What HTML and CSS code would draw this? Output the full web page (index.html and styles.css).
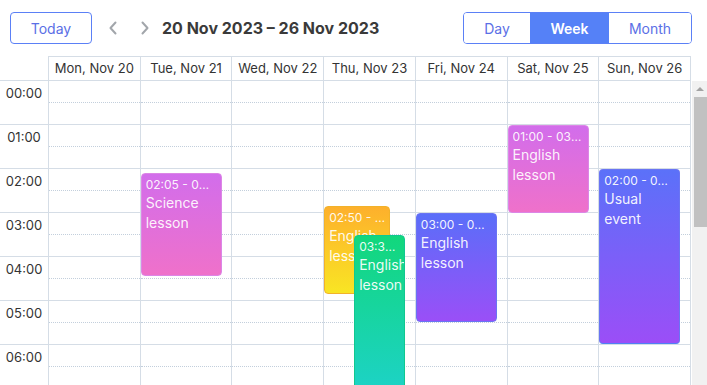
FILE: index.html
```html
<!DOCTYPE html>
<html lang="en">
<head>
<meta charset="utf-8">
<title>Scheduler</title>
<link rel="stylesheet" href="styles.css">
</head>
<body>
<div class="scheduler">
  <div class="toolbar">
    <button class="btn-today">Today</button>
    <button class="nav-btn nav-prev" aria-label="Previous">
      <svg width="10" height="14" viewBox="0 0 10 14"><path d="M7.5 1.5 L2.5 7 L7.5 12.5" fill="none" stroke="#a2a6ab" stroke-width="2" stroke-linecap="round" stroke-linejoin="round"/></svg>
    </button>
    <button class="nav-btn" aria-label="Next">
      <svg width="10" height="14" viewBox="0 0 10 14"><path d="M2.5 1.5 L7.5 7 L2.5 12.5" fill="none" stroke="#a2a6ab" stroke-width="2" stroke-linecap="round" stroke-linejoin="round"/></svg>
    </button>
    <div class="title">20 Nov 2023 – 26 Nov 2023</div>
    <div class="views">
      <button class="view">Day</button>
      <button class="view active">Week</button>
      <button class="view">Month</button>
    </div>
  </div>

  <div class="head">
    <div class="corner"></div>
    <div class="day-head">Mon, Nov 20</div>
    <div class="day-head">Tue, Nov 21</div>
    <div class="day-head">Wed, Nov 22</div>
    <div class="day-head">Thu, Nov 23</div>
    <div class="day-head">Fri, Nov 24</div>
    <div class="day-head">Sat, Nov 25</div>
    <div class="day-head">Sun, Nov 26</div>
  </div>

  <div class="body">
    <div class="grid">
      <div class="times">
        <div class="time">00:00</div>
        <div class="time">01:00</div>
        <div class="time">02:00</div>
        <div class="time">03:00</div>
        <div class="time">04:00</div>
        <div class="time">05:00</div>
        <div class="time">06:00</div>
        <div class="time">07:00</div>
      </div>

      <div class="day">
        <div class="slot"><div class="half"></div></div><div class="slot"><div class="half"></div></div><div class="slot"><div class="half"></div></div><div class="slot"><div class="half"></div></div><div class="slot"><div class="half"></div></div><div class="slot"><div class="half"></div></div><div class="slot"><div class="half"></div></div><div class="slot"><div class="half"></div></div>
      </div>

      <div class="day">
        <div class="slot"><div class="half"></div></div><div class="slot"><div class="half"></div></div><div class="slot"><div class="half"></div></div><div class="slot"><div class="half"></div></div><div class="slot"><div class="half"></div></div><div class="slot"><div class="half"></div></div><div class="slot"><div class="half"></div></div><div class="slot"><div class="half"></div></div>
        <div class="event pink" style="top:92px;height:103px;left:0;width:81px">
          <div class="ev-time">02:05 - 04:25</div>
          <div class="ev-title">Science lesson</div>
        </div>
      </div>

      <div class="day">
        <div class="slot"><div class="half"></div></div><div class="slot"><div class="half"></div></div><div class="slot"><div class="half"></div></div><div class="slot"><div class="half"></div></div><div class="slot"><div class="half"></div></div><div class="slot"><div class="half"></div></div><div class="slot"><div class="half"></div></div><div class="slot"><div class="half"></div></div>
      </div>

      <div class="day">
        <div class="slot"><div class="half"></div></div><div class="slot"><div class="half"></div></div><div class="slot"><div class="half"></div></div><div class="slot"><div class="half"></div></div><div class="slot"><div class="half"></div></div><div class="slot"><div class="half"></div></div><div class="slot"><div class="half"></div></div><div class="slot"><div class="half"></div></div>
        <div class="event orange" style="top:125px;height:88px;left:0;width:66px">
          <div class="ev-time">02:50 - 04:50</div>
          <div class="ev-title">English lesson</div>
        </div>
        <div class="event green" style="top:154px;height:175px;left:30px;width:51px">
          <div class="ev-time">03:30 - 07:30</div>
          <div class="ev-title">English lesson</div>
        </div>
      </div>

      <div class="day">
        <div class="slot"><div class="half"></div></div><div class="slot"><div class="half"></div></div><div class="slot"><div class="half"></div></div><div class="slot"><div class="half"></div></div><div class="slot"><div class="half"></div></div><div class="slot"><div class="half"></div></div><div class="slot"><div class="half"></div></div><div class="slot"><div class="half"></div></div>
        <div class="event violet" style="top:132px;height:109px;left:0;width:81px">
          <div class="ev-time">03:00 - 05:30</div>
          <div class="ev-title">English lesson</div>
        </div>
      </div>

      <div class="day">
        <div class="slot"><div class="half"></div></div><div class="slot"><div class="half"></div></div><div class="slot"><div class="half"></div></div><div class="slot"><div class="half"></div></div><div class="slot"><div class="half"></div></div><div class="slot"><div class="half"></div></div><div class="slot"><div class="half"></div></div><div class="slot"><div class="half"></div></div>
        <div class="event pink" style="top:44px;height:88px;left:0;width:81px">
          <div class="ev-time">01:00 - 03:00</div>
          <div class="ev-title">English lesson</div>
        </div>
      </div>

      <div class="day">
        <div class="slot"><div class="half"></div></div><div class="slot"><div class="half"></div></div><div class="slot"><div class="half"></div></div><div class="slot"><div class="half"></div></div><div class="slot"><div class="half"></div></div><div class="slot"><div class="half"></div></div><div class="slot"><div class="half"></div></div><div class="slot"><div class="half"></div></div>
        <div class="event blue" style="top:88px;height:175px;left:0;width:81px">
          <div class="ev-time">02:00 - 06:00</div>
          <div class="ev-title">Usual event</div>
        </div>
      </div>
    </div>

    <div class="scrollbar">
      <div class="sb-arrow"></div>
      <div class="sb-thumb"></div>
    </div>
  </div>
</div>
</body>
</html>
```

FILE: styles.css
```css
* { box-sizing: border-box; }

html, body {
  margin: 0;
  padding: 0;
  background: #ffffff;
}

body {
  font-family: Inter, "Noto Sans", "Liberation Sans", sans-serif;
  color: #333333;
  width: 707px;
  height: 385px;
  overflow: hidden;
}

.scheduler {
  display: flex;
  flex-direction: column;
  width: 707px;
}

/* ---------- toolbar ---------- */
.toolbar {
  display: flex;
  align-items: center;
  height: 56px;
  padding: 12px 15px 12px 10px;
}

.btn-today {
  width: 82px;
  height: 32px;
  border: 1px solid #5b80f6;
  border-radius: 4px;
  background: #ffffff;
  color: #5b6fe6;
  font-family: inherit;
  font-size: 14px;
  font-weight: 400;
  padding: 0;
}

.nav-btn {
  width: 32px;
  height: 32px;
  border: none;
  background: transparent;
  padding: 0;
  display: flex;
  align-items: center;
  justify-content: center;
}

.nav-prev { margin-left: 5px; }

.title {
  margin-left: 1px;
  font-size: 16px;
  font-weight: 700;
  color: #3a3a3a;
  white-space: nowrap;
  flex: 1;
}

.views {
  display: flex;
  height: 32px;
  border: 1px solid #5b80f6;
  border-radius: 4px;
  overflow: hidden;
}

.view {
  border: none;
  background: #ffffff;
  color: #5b6fe6;
  font-family: inherit;
  font-size: 14px;
  font-weight: 400;
  padding: 0;
  height: 30px;
}

.view:nth-child(1) { width: 66px; }
.view:nth-child(2) { width: 79px; }
.view:nth-child(3) { width: 82px; }

.view.active {
  background: #5581f7;
  color: #ffffff;
  font-weight: 600;
}

/* ---------- grid header ---------- */
.head {
  display: grid;
  grid-template-columns: 49px repeat(7, 1fr);
  width: 691px;
  border-bottom: 1px solid #d5dde6;
}

.corner {
  border-right: 1px solid #d5dde6;
}

.day-head {
  height: 24px;
  border-top: 1px solid #d5dde6;
  border-right: 1px solid #d5dde6;
  font-size: 13px;
  line-height: 22px;
  text-align: center;
  color: #333333;
  white-space: nowrap;
}

/* ---------- grid body ---------- */
.body {
  display: flex;
  height: 304px;
  overflow: hidden;
}

.grid {
  flex: 0 0 691px;
  display: grid;
  grid-template-columns: 49px repeat(7, 1fr);
  align-items: start;
}

.times {
  border-right: 1px solid #d5dde6;
}

.time {
  height: 44px;
  border-bottom: 1px solid #d5dde6;
  font-size: 13px;
  line-height: 16px;
  padding-top: 4px;
  text-align: center;
  color: #333333;
}

.day {
  position: relative;
  border-right: 1px solid #d5dde6;
}

.slot {
  height: 44px;
  border-bottom: 1px solid #d5dde6;
}

.half {
  height: 22px;
  border-bottom: 1px dotted #c3cfdc;
}

/* ---------- events ---------- */
.event {
  position: absolute;
  border-radius: 4px;
  padding: 3px 4px;
  overflow: hidden;
  color: rgba(255, 255, 255, 0.93);
  border: 1px solid transparent;
}

.ev-time {
  font-size: 12px;
  line-height: 16px;
  white-space: nowrap;
  overflow: hidden;
  text-overflow: ellipsis;
}

.ev-title {
  font-size: 14px;
  line-height: 20px;
}

.pink {
  background: linear-gradient(180deg, #d26deb 0%, #ef71ca 100%);
  border-color: #dc86e6;
}

.orange {
  background: linear-gradient(180deg, #fdb02c 0%, #f9e524 100%);
  border-color: #f2b22a;
}

.green {
  background: linear-gradient(180deg, #12d77c 0%, #1ed2cf 100%);
  border-color: #10c890;
  z-index: 1;
}

.violet {
  background: linear-gradient(180deg, #5a6ef9 0%, #9a4ff7 100%);
  border-color: #6a73f3;
}

.blue {
  background: linear-gradient(180deg, #5b71f9 0%, #9b4ef7 100%);
  border-color: #6a75f3;
  border-bottom-color: #4f80f4;
}

/* ---------- scrollbar ---------- */
.scrollbar {
  flex: 0 0 15px;
  margin-left: 1px;
  margin-top: -1px;
  background: #f1f1f1;
  display: flex;
  flex-direction: column;
}

.sb-arrow {
  height: 17px;
  display: flex;
  align-items: center;
  justify-content: center;
}

.sb-arrow::before {
  content: "";
  width: 0;
  height: 0;
  border-left: 4px solid transparent;
  border-right: 4px solid transparent;
  border-bottom: 4px solid #a3a3a3;
}

.sb-thumb {
  height: 130px;
  margin-left: 2px;
  background: #c1c1c1;
}
```
